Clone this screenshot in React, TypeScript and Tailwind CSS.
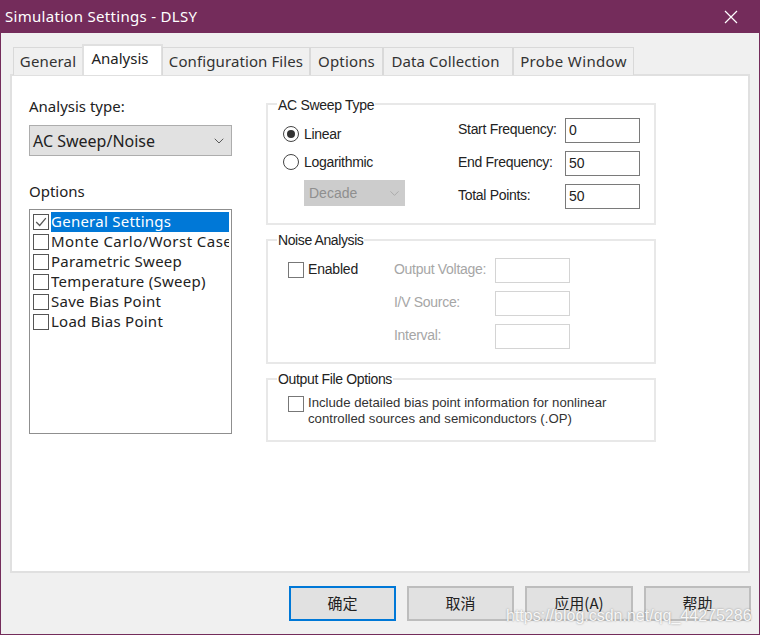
import { ChevronDown } from 'lucide-react'

const uiFont = "[font-family:'Noto_Sans','Open_Sans',sans-serif]"

const tabs = [
  { label: 'General', width: 'w-[70px]', track: 'tracking-[0.15px]' },
  { label: 'Analysis', width: 'w-[81px]', active: true, track: 'pr-[5px]' },
  { label: 'Configuration Files', width: 'w-[148px]', track: 'tracking-[0.1px]' },
  { label: 'Options', width: 'w-[73px]', track: 'tracking-[0.15px]' },
  { label: 'Data Collection', width: 'w-[130px]', track: 'tracking-[0.1px] pr-[5px]' },
  { label: 'Probe Window', width: 'w-[121px]', track: 'tracking-[0.35px]' },
]

const options = [
  'General Settings',
  'Monte Carlo/Worst Case',
  'Parametric Sweep',
  'Temperature (Sweep)',
  'Save Bias Point',
  'Load Bias Point',
]

function Check({ checked = false, light = false }: { checked?: boolean; light?: boolean }) {
  return (
    <span className={`flex h-[16px] w-[16px] shrink-0 items-center justify-center border-[1.5px] bg-white ${light ? 'border-[#777]' : 'border-[#555]'}`}>
      {checked && (
        <svg viewBox="0 0 16 16" className="h-[14px] w-[14px]" fill="none" stroke="#555" strokeWidth="1.4">
          <path d="M2.5 8 L6.5 12 L13.5 3.5" />
        </svg>
      )}
    </span>
  )
}

function Radio({ checked = false }: { checked?: boolean }) {
  return (
    <span className="flex h-[16px] w-[16px] shrink-0 items-center justify-center rounded-full border-[1.5px] border-[#444] bg-white">
      {checked && <span className="h-[8px] w-[8px] rounded-full bg-[#333]" />}
    </span>
  )
}

function Field({ label, value, disabled = false }: { label: string; value?: string; disabled?: boolean }) {
  return (
    <div className="flex items-center">
      <span className={`pb-[3px] text-[14px] tracking-[-0.3px] ${disabled ? 'w-[101px] text-[#a6a6a6]' : 'w-[107px] text-[#222]'}`}>{label}</span>
      <span
        className={`flex h-[25px] w-[75px] items-center border-[1.5px] pl-[3px] text-[14px] text-[#222] ${
          disabled ? 'border-[#d4d4d4]' : 'border-[#7a7a7a]'
        }`}
      >
        {value}
      </span>
    </div>
  )
}

export default function App() {
  return (
    <div className="flex h-[635px] w-[760px] flex-col overflow-hidden border-x border-b border-[#742c5b] bg-[#f0f0f0] [font-family:'Liberation_Sans',sans-serif]">
      {/* Title bar */}
      <div className="flex h-[33px] shrink-0 items-center justify-between bg-[#742c5b] pl-[4px] pr-[21px] text-white">
        <span className={`text-[15px] tracking-[0.3px] ${uiFont}`}>Simulation Settings - DLSY</span>
        <svg viewBox="0 0 14 14" className="h-[14px] w-[14px]" stroke="white" strokeWidth="1.2" fill="none">
          <path d="M1 1 L13 13 M13 1 L1 13" />
        </svg>
      </div>

      {/* Tabs */}
      <div className={`relative z-10 mt-[11px] flex h-[31px] shrink-0 items-end pl-[12px] ${uiFont}`}>
        {tabs.map((tab) =>
          tab.active ? (
            <div
              key={tab.label}
              className={`-ml-[1px] -mr-[1px] flex h-[31px] items-start justify-center border-x-2 border-t-2 border-[#e0e0e0] bg-white pt-[1px] text-[15px] text-[#222] ${tab.width} ${tab.track}`}
            >
              {tab.label}
            </div>
          ) : (
            <div
              key={tab.label}
              className={`flex h-[28px] items-center justify-center border-x border-t border-[#d9d9d9] bg-[#f0f0f0] text-[15px] text-[#333] ${tab.width} ${tab.track}`}
            >
              {tab.label}
            </div>
          ),
        )}
      </div>

      {/* Page */}
      <div className="mx-[9px] -mt-[1px] flex h-[499px] gap-[34px] border-2 border-[#e0e0e0] bg-white pl-[17px] pt-[19px]">
        <div className={`flex w-[203px] flex-col ${uiFont}`}>
          <div className="h-[22px] text-[15px] leading-[22px] text-[#222]">Analysis type:</div>
          <div className="mt-[8px] flex h-[31px] items-center justify-between border-[1.5px] border-[#adadad] bg-[#e1e1e1] pl-[3px] pr-[4px] text-[16px] text-[#222]">
            AC Sweep/Noise
            <ChevronDown size={16} strokeWidth={1.3} color="#444" />
          </div>
          <div className="mt-[24px] h-[22px] text-[15px] leading-[22px] text-[#222]">Options</div>
          <div className="mt-[7px] flex h-[225px] flex-col overflow-hidden border-[1.5px] border-[#8f8f8f] bg-white pl-[3px] pt-[2px]">
            {options.map((option, i) => (
              <div key={option} className="flex h-[20px] shrink-0 items-center gap-[2px]">
                <Check checked={i === 0} />
                <span
                  className={`h-[20px] w-[178px] shrink-0 overflow-hidden whitespace-nowrap text-[15px] leading-[19px] ${
                    i === 1 ? 'tracking-[0.45px]' : 'tracking-[0.25px]'
                  } ${i === 0 ? 'bg-[#0078d7] text-white' : 'text-[#222]'}`}
                >
                  {option}
                </span>
              </div>
            ))}
          </div>
        </div>

        <div className="flex w-[390px] flex-col">
          <fieldset className="h-[130px] border-2 border-[#e8e8e8] pl-[15px] pr-[14px]">
            <legend className="-ml-[6px] px-[1px] pt-[2px] text-[14px] leading-[16px] tracking-[-0.3px] text-[#222]">AC Sweep Type</legend>
            <div className="flex justify-between">
              <div className="flex flex-col pt-[11px]">
                <div className="flex h-[20px] items-center gap-[5px] text-[14px] tracking-[-0.3px] text-[#222]">
                  <Radio checked />
                  Linear
                </div>
                <div className="mt-[8px] flex h-[20px] items-center gap-[5px] text-[14px] tracking-[-0.3px] text-[#222]">
                  <Radio />
                  Logarithmic
                </div>
                <div className="ml-[21px] mt-[8px] flex h-[26px] w-[101px] items-center justify-between bg-[#cccccc] pl-[5px] pr-[3px] text-[14px] text-[#8f8f8f]">
                  Decade
                  <ChevronDown size={15} strokeWidth={1.2} color="#a0a0a0" />
                </div>
              </div>
              <div className="flex flex-col gap-[8px] pt-[5px]">
                <Field label="Start Frequency:" value="0" />
                <Field label="End Frequency:" value="50" />
                <Field label="Total Points:" value="50" />
              </div>
            </div>
          </fieldset>

          <fieldset className="mt-[6px] h-[133px] border-2 border-[#e8e8e8] pl-[20px] pr-[84px]">
            <legend className="-ml-[11px] px-[1px] pt-[1px] text-[14px] leading-[16px] tracking-[-0.4px] text-[#222]">Noise Analysis</legend>
            <div className="flex justify-between pt-[10px]">
              <div className="-mt-[1px] flex h-[25px] items-center gap-[4px] text-[14px] tracking-[-0.2px] text-[#222]">
                <Check light />
                Enabled
              </div>
              <div className="flex flex-col gap-[8px]">
                <Field label="Output Voltage:" disabled />
                <Field label="I/V Source:" disabled />
                <Field label="Interval:" disabled />
              </div>
            </div>
          </fieldset>

          <fieldset className="mt-[6px] h-[72px] border-2 border-[#e8e8e8] pl-[20px]">
            <legend className="-ml-[11px] px-[1px] pt-[1px] text-[14px] leading-[16px] tracking-[-0.35px] text-[#222]">Output File Options</legend>
            <div className="flex items-start gap-[4px] pt-[8px]">
              <span className="mt-[1px]">
                <Check light />
              </span>
              <span className="text-[13.2px] leading-[16px] text-[#333]">
                Include detailed bias point information for nonlinear
                <br />
                controlled sources and semiconductors (.OP)
              </span>
            </div>
          </fieldset>
        </div>
      </div>

      {/* Footer buttons */}
      <div className="mt-[13px] flex justify-end gap-[11px] pr-[8px] text-[15px] text-[#222] [font-family:'Noto_Sans_CJK_SC','Noto_Sans',sans-serif]">
        <div className="flex h-[35px] w-[107px] items-center justify-center border-2 border-[#0078d7] bg-[#e1e1e1]">确定</div>
        <div className="flex h-[35px] w-[107px] items-center justify-center border-2 border-[#bdbdbd] bg-[#e1e1e1]">取消</div>
        <div className="flex h-[35px] w-[108px] items-center justify-center border-2 border-[#bdbdbd] bg-[#e1e1e1]">应用(A)</div>
        <div className="flex h-[35px] w-[107px] items-center justify-center border-2 border-[#bdbdbd] bg-[#e1e1e1]">帮助</div>
      </div>

      {/* Watermark */}
      <div className="pointer-events-none absolute left-[506px] top-[604px] text-[16px] text-white/90 [text-shadow:0_0_2px_#8a8a8a]">
        https://blog.csdn.net/qq_44275286
      </div>
    </div>
  )
}
